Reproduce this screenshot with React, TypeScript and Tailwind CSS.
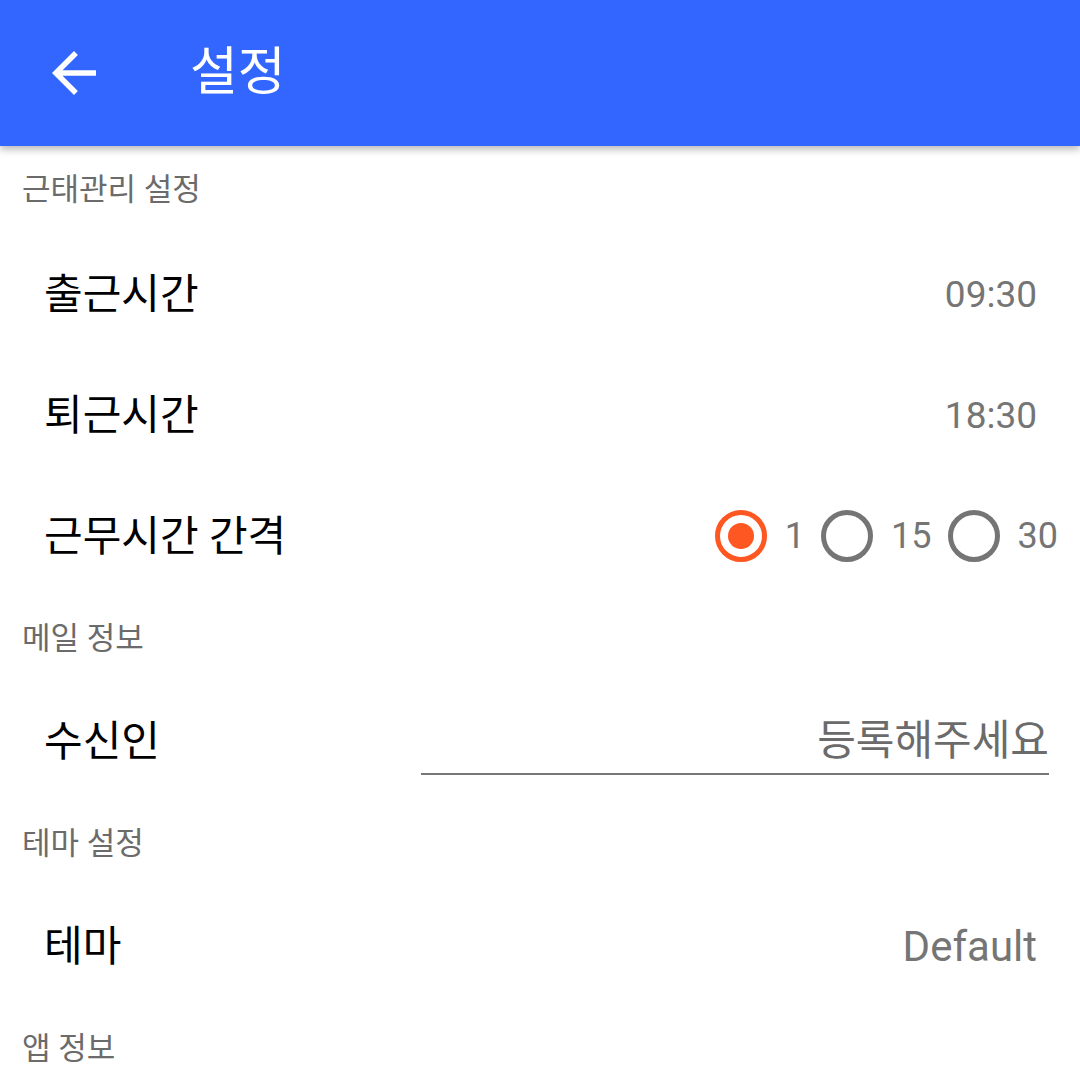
import React from 'react'

const font = { fontFamily: 'Roboto, "Noto Sans CJK KR", sans-serif' }

const SectionHeader = ({ title, first }: { title: string; first?: boolean }): JSX.Element => (
  <div className={`flex items-center px-[22px] text-[31px] text-[#6b6b6b] ${first ? 'h-[88px]' : 'h-[84px]'}`}>
    {title}
  </div>
)

const Row = ({ label, children }: { label: string; children?: React.ReactNode }): JSX.Element => (
  <div className="flex h-[121px] items-center justify-between pl-[44px] pr-[43px]">
    <div className="text-[42px] text-black">{label}</div>
    {children}
  </div>
)

const Radio = ({ checked, label }: { checked?: boolean; label: string }): JSX.Element => (
  <div className="flex items-center gap-[18px]">
    <div
      className={`flex h-[52px] w-[52px] items-center justify-center rounded-full border-[5px] ${
        checked ? 'border-[#ff5722]' : 'border-[#757575]'
      }`}
    >
      {checked && <div className="h-[26px] w-[26px] rounded-full bg-[#ff5722]" />}
    </div>
    <span className="text-[36px] text-[#757575]">{label}</span>
  </div>
)

const App = (): JSX.Element => {
  return (
    <div className="h-[1080px] w-[1080px] overflow-hidden bg-white" style={font}>
      <header className="relative z-10 flex h-[146px] items-center bg-[#3366ff] shadow-[0_3px_8px_rgba(0,0,0,0.3)]">
        <div className="flex w-[190px] justify-start pl-[41px]">
          <svg width="66" height="66" viewBox="0 0 24 24" fill="white">
            <path d="M20 11H7.83l5.59-5.59L12 4l-8 8 8 8 1.41-1.41L7.83 13H20v-2z" />
          </svg>
        </div>
        <h1 className="text-[52px] font-normal text-white">설정</h1>
      </header>

      <SectionHeader title="근태관리 설정" first />
      <Row label="출근시간">
        <span className="text-[37px] text-[#757575]">09:30</span>
      </Row>
      <Row label="퇴근시간">
        <span className="text-[37px] text-[#757575]">18:30</span>
      </Row>
      <div className="flex h-[121px] items-center justify-between pl-[44px] pr-[22px]">
        <div className="text-[42px] text-black">근무시간 간격</div>
        <div className="-mt-[2px] flex items-center gap-[16px]">
          <Radio checked label="1" />
          <Radio label="15" />
          <Radio label="30" />
        </div>
      </div>

      <SectionHeader title="메일 정보" />
      <div className="flex h-[121px] items-center justify-between pl-[44px] pr-[31px]">
        <div className="text-[42px] text-black">수신인</div>
        <div className="mt-[4px] w-[628px] border-b-2 border-[#777] pb-[4px] text-right text-[42px] leading-[56px] text-[#6b6b6b]">
          등록해주세요
        </div>
      </div>

      <SectionHeader title="테마 설정" />
      <Row label="테마">
        <span className="text-[42px] text-[#757575]">Default</span>
      </Row>

      <SectionHeader title="앱 정보" />
    </div>
  )
}

export default App
